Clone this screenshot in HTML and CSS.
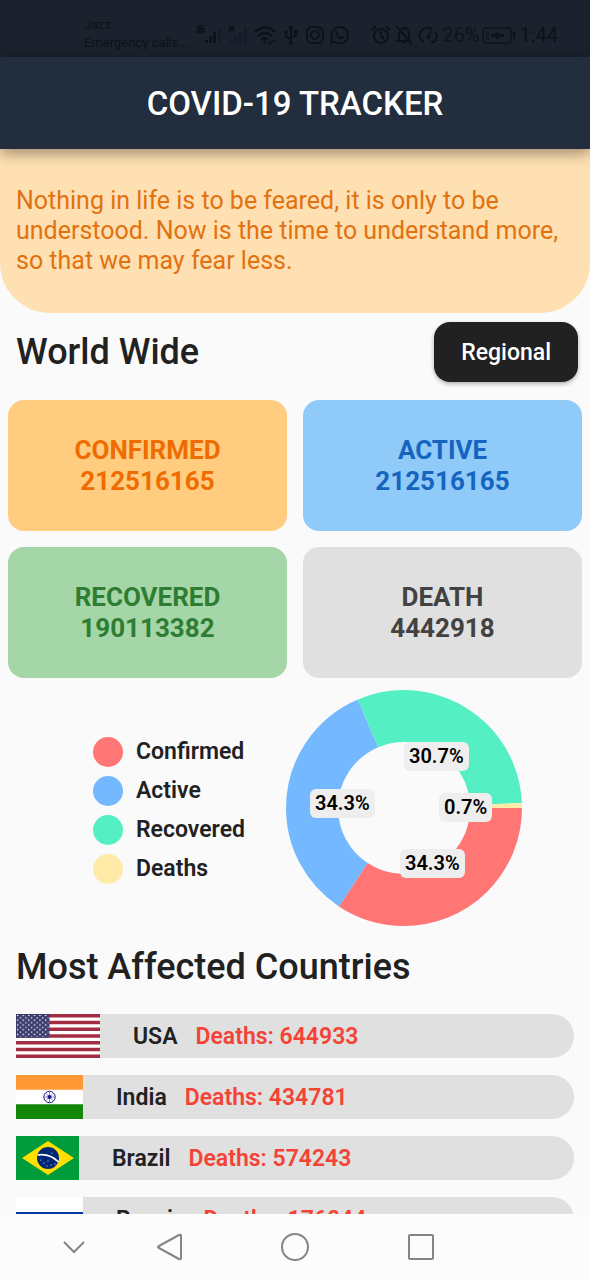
FILE: index.html
```html
<!DOCTYPE html>
<html lang="en">
<head>
<meta charset="utf-8">
<meta name="viewport" content="width=device-width, initial-scale=1">
<title>COVID-19 Tracker</title>
<link rel="stylesheet" href="styles.css">
</head>
<body class="app">
<div class="status">
  <div class="carrier"><span>Jazz</span><span>Emergency calls...</span></div>
  <div class="status-icons">
    <svg width="28" height="24" viewBox="0 0 28 24"><path d="M1 3h3v6H1M2 6h2M9 3H6v6h3V6H7" fill="none" stroke="currentColor" stroke-width="1.6"/><path d="M10 17h3v3h-3zM14 13h3v7h-3zM18 9h3v11h-3z" fill="currentColor"/><path d="M23 4h3v16h-3z" fill="currentColor" opacity=".3"/></svg>
    <svg width="22" height="24" viewBox="0 0 22 24"><path d="M2 3l5 5M7 3L2 8" stroke="currentColor" stroke-width="2"/><path d="M2 17h3v3H2zM7 13h3v7H7zM12 9h3v11h-3zM17 4h3v16h-3z" fill="currentColor" opacity=".3"/></svg>
    <svg width="24" height="24" viewBox="0 0 24 24"><path d="M2 9q10-9 20 0M5 13q7-6 14 0M8 17q4-3 7-1" fill="none" stroke="currentColor" stroke-width="2.4"/><path d="M10 18l2 3 2-3zM15 21l2-4 2 4zM19 17l2 4 1-4z" fill="currentColor"/></svg>
    <svg width="20" height="24" viewBox="0 0 20 24"><path d="M10 5v14M5 10v3l5 4M15 9v3l-5 3" fill="none" stroke="currentColor" stroke-width="2"/><path d="M10 2l3 4H7zM13 7h4v4h-4z" fill="currentColor"/><circle cx="5" cy="9" r="2" fill="currentColor"/><circle cx="10" cy="20" r="2" fill="currentColor"/></svg>
    <svg width="20" height="24" viewBox="0 0 20 24"><g fill="none" stroke="currentColor" stroke-width="2"><rect x="2" y="4" width="16" height="16" rx="5"/><circle cx="10" cy="12" r="4"/></g><circle cx="15" cy="7" r="1" fill="currentColor"/></svg>
    <svg width="20" height="24" viewBox="0 0 20 24"><path d="M2 20l1-5a8.300 8.300 0 1 1 3 4z" fill="none" stroke="currentColor" stroke-width="2"/><path d="M6 8q1-2 2 0l1 2-1 1q1 2 3 3l1-1 3 1q0 3-3 2.500Q7 15 6 8z" fill="currentColor"/></svg>
  </div>
  <div class="status-icons status-end">
    <svg width="20" height="24" viewBox="0 0 20 24"><g fill="none" stroke="currentColor" stroke-width="2"><circle cx="10" cy="13" r="7"/><path d="M10 8v5l3 3M1 7l4-4M19 7l-4-4"/></g></svg>
    <svg width="20" height="24" viewBox="0 0 20 24"><path d="M7 6q8-3 8 5v5M5 9v7l-2 2h13M2 3l16 18M10 3v2" fill="none" stroke="currentColor" stroke-width="2"/><path d="M8 19h4l-2 2z" fill="currentColor"/></svg>
    <svg width="22" height="24" viewBox="0 0 22 24"><path d="M6 19Q-1 13 5 7q4-4 10-1M18 9q4 5-1 10h-3M6 19v-3" fill="none" stroke="currentColor" stroke-width="2"/><path d="M9 14l7-8-4 10q-3 1-3-2z" fill="currentColor"/></svg>
    <span>26%</span>
    <svg width="34" height="24" viewBox="0 0 34 24"><rect x="1" y="5" width="28" height="15" rx="3" fill="none" stroke="currentColor" stroke-width="2" opacity=".7"/><path d="M31 9h2v7h-2zM9 11h4l3-3 1 3h5v3h-5l-1 3-3-3H9z" fill="currentColor"/><path d="M4 8h3v9H4z" fill="currentColor" opacity=".5"/></svg>
    <span>1:44</span>
  </div>
</div>
<header class="appbar"><h1>COVID-19 TRACKER</h1></header>
<main class="content">
  <p class="quote">Nothing in life is to be feared, it is only to be understood. Now is the time to understand more, so that we may fear less.</p>
  <div class="section-head">
    <h2>World Wide</h2>
    <button class="regional" type="button">Regional</button>
  </div>
  <section class="cards">
    <div class="card confirmed"><span>CONFIRMED</span><span>212516165</span></div>
    <div class="card active"><span>ACTIVE</span><span>212516165</span></div>
    <div class="card recovered"><span>RECOVERED</span><span>190113382</span></div>
    <div class="card death"><span>DEATH</span><span>4442918</span></div>
  </section>
  <section class="chart">
    <ul class="legend">
      <li><i class="dot red"></i>Confirmed</li>
      <li><i class="dot blue"></i>Active</li>
      <li><i class="dot green"></i>Recovered</li>
      <li><i class="dot yellow"></i>Deaths</li>
    </ul>
    <div class="donut">
      <svg width="238" height="238" viewBox="0 0 238 238">
        <g fill="none" stroke-width="52">
          <circle cx="119" cy="119" r="92" pathLength="1000" stroke="#ff7675" stroke-dasharray="343 657"/>
          <circle cx="119" cy="119" r="92" pathLength="1000" stroke="#74b9ff" stroke-dasharray="343 657" stroke-dashoffset="-343"/>
          <circle cx="119" cy="119" r="92" pathLength="1000" stroke="#55efc4" stroke-dasharray="307 693" stroke-dashoffset="-686"/>
          <circle cx="119" cy="119" r="92" pathLength="1000" stroke="#ffeaa7" stroke-dasharray="7 993" stroke-dashoffset="-993"/>
        </g>
      </svg>
      <span class="tag tag-green">30.7%</span>
      <span class="tag tag-blue">34.3%</span>
      <span class="tag tag-yellow">0.7%</span>
      <span class="tag tag-red">34.3%</span>
    </div>
  </section>
  <h2 class="affected">Most Affected Countries</h2>
  <ul class="countries">
    <li class="country">
      <svg width="84" height="44" viewBox="0 0 84 44">
        <defs><pattern id="stars" width="5.600" height="4.800" patternUnits="userSpaceOnUse"><circle cx="1.600" cy="1.400" r=".8" fill="#fff"/><circle cx="4.400" cy="3.800" r=".8" fill="#fff"/></pattern></defs>
        <path d="M0 0h84v44H0z" fill="#fff"/>
        <path d="M0 1.700h84M0 8.460h84M0 15.230h84M0 22h84M0 28.770h84M0 35.540h84M0 42.300h84" stroke="#a32e44" stroke-width="3.390"/>
        <path d="M0 0h33.500v23.700H0z" fill="#3c3b6e"/><path d="M1 1h31.500v22H1z" fill="url(#stars)"/>
      </svg>
      <span class="name">USA</span><span class="deaths">Deaths: 644933</span>
    </li>
    <li class="country">
      <svg width="67" height="44" viewBox="0 0 67 44">
        <path d="M0 0h67v44H0z" fill="#fff"/><path d="M0 0h67v14.700H0z" fill="#ff9933"/><path d="M0 29.300h67V44H0z" fill="#138808"/>
        <g stroke="#1a1a8c" fill="none"><circle cx="33.500" cy="22" r="5.700"/><path d="M33.500 17v10M28.500 22h10M30 18.500l7 7M37 18.500l-7 7" stroke-width=".5"/></g><circle cx="33.500" cy="22" r="2" fill="#1a1a8c"/>
      </svg>
      <span class="name">India</span><span class="deaths">Deaths: 434781</span>
    </li>
    <li class="country">
      <svg width="63" height="44" viewBox="0 0 63 44">
        <path d="M0 0h63v44H0z" fill="#009b3a"/><path d="M6 22L32 5l26 17-26 17z" fill="#fedf00"/><circle cx="32" cy="22" r="11" fill="#002776"/>
        <path d="M21.500 19q12-2 21 7" fill="none" stroke="#fff" stroke-width="1.700"/>
        <g fill="#fff"><circle cx="25" cy="24" r=".6"/><circle cx="28" cy="27" r=".6"/><circle cx="32" cy="25" r=".5"/><circle cx="35" cy="29" r=".6"/><circle cx="39" cy="28" r=".6"/><circle cx="31" cy="30" r=".5"/><circle cx="36" cy="17" r=".5"/></g>
      </svg>
      <span class="name">Brazil</span><span class="deaths">Deaths: 574243</span>
    </li>
    <li class="country">
      <svg width="67" height="44" viewBox="0 0 67 44"><path d="M0 0h67v15H0z" fill="#fff"/><path d="M0 15h67v15H0z" fill="#0039a6"/><path d="M0 30h67v14H0z" fill="#d52b1e"/></svg>
      <span class="name">Russia</span><span class="deaths">Deaths: 176044</span>
    </li>
  </ul>
</main>
<nav class="navbar">
  <button class="hide" type="button" aria-label="Hide"><svg width="24" height="30" viewBox="0 0 24 30"><path d="M2 10l10 10 10-10"/></svg></button>
  <div class="nav-main">
    <button type="button" aria-label="Back"><svg width="28" height="30" viewBox="0 0 28 30"><path d="M24 3q2-1 2 1v22q0 2-2 1L4 16q-2-1 0-2z"/></svg></button>
    <button type="button" aria-label="Home"><svg width="30" height="30" viewBox="0 0 30 30"><circle cx="15" cy="15" r="13"/></svg></button>
    <button type="button" aria-label="Recents"><svg width="28" height="30" viewBox="0 0 28 30"><rect x="2" y="3" width="24" height="24" rx="1"/></svg></button>
  </div>
</nav>
</body>
</html>
```
FILE: styles.css
```css
* { box-sizing: border-box; }
.app {
  margin: 0;
  height: 100vh;
  display: flex;
  flex-direction: column;
  background: #fafafa;
  color: #212121;
  font-family: Roboto, sans-serif;
}
h1, h2, p, ul { margin: 0; padding: 0; }
ul { list-style: none; }
svg { display: block; flex: none; }
button { font: inherit; border: 0; padding: 0; }

.status {
  flex: none;
  display: flex;
  align-items: flex-end;
  height: 57px;
  padding: 0 32px 5px 84px;
  background: #1b222d;
  color: #0c121b;
}
.carrier {
  display: flex;
  flex-direction: column;
  width: 111px;
  font-size: 13px;
  line-height: 18px;
  white-space: nowrap;
}
.status-icons {
  display: flex;
  align-items: center;
  gap: 4px;
  height: 34px;
  font-size: 20px;
}
.status-end { gap: 3px; margin-left: auto; }

.appbar {
  flex: none;
  position: relative;
  z-index: 1;
  display: flex;
  align-items: center;
  justify-content: center;
  height: 92px;
  background: #222d3d;
  color: #fff;
  box-shadow: 0 4px 14px rgba(0, 0, 0, .4);
}
.appbar h1 { font-size: 33px; font-weight: 500; }

.content { flex: 1; min-height: 0; overflow: hidden; }
.quote {
  padding: 37px 16px;
  border-radius: 0 0 50px 50px;
  background: #ffe0b2;
  color: #e2720f;
  font-size: 25px;
  line-height: 30px;
}
.section-head {
  display: flex;
  align-items: center;
  justify-content: space-between;
  padding: 9px 12px 18px 16px;
}
h2 { font-size: 36px; font-weight: 500; line-height: 42px; }
.regional {
  height: 60px;
  padding: 0 27px;
  border-radius: 16px;
  background: #212121;
  color: #fff;
  font-size: 23px;
  font-weight: 500;
  box-shadow: 0 2px 4px rgba(0, 0, 0, .3);
}

.cards {
  display: grid;
  grid-template-columns: 1fr 1fr;
  gap: 16px;
  padding: 0 8px;
}
.card {
  display: flex;
  flex-direction: column;
  align-items: center;
  justify-content: center;
  height: 131px;
  border-radius: 16px;
  font-size: 26px;
  font-weight: 700;
  line-height: 31px;
}
.confirmed { background: #ffcc80; color: #ef6c00; }
.active { background: #90caf9; color: #1565c0; }
.recovered { background: #a5d6a7; color: #2e7d32; }
.death { background: #e0e0e0; color: #424242; }

.chart {
  display: flex;
  align-items: center;
  justify-content: center;
  gap: 40px;
  padding: 11px 0 0 26px;
}
.legend { display: grid; gap: 9px; padding-top: 4px; }
.legend li {
  display: flex;
  align-items: center;
  gap: 13px;
  font-size: 23px;
  font-weight: 600;
  line-height: 30px;
}
.dot { width: 30px; height: 30px; border-radius: 50%; }
.red { background: #ff7675; }
.blue { background: #74b9ff; }
.green { background: #55efc4; }
.yellow { background: #ffeaa7; }
.donut { position: relative; }
.tag {
  position: absolute;
  padding: 0 5px;
  border-radius: 6px;
  background: #eee;
  color: #000;
  font-size: 20px;
  font-weight: 600;
  line-height: 29px;
}
.tag-green { left: 119px; top: 53px; }
.tag-blue { left: 25px; top: 100px; }
.tag-yellow { left: 154px; top: 104px; }
.tag-red { left: 115px; top: 160px; }

.affected { padding: 19px 16px 26px; }
.countries { display: grid; gap: 17px; padding: 0 16px; }
.country {
  display: flex;
  align-items: center;
  height: 44px;
  border-radius: 0 22px 22px 0;
  background: #e0e0e0;
  font-size: 23px;
  font-weight: 600;
}
.name { margin: 0 18px 0 33px; }
.deaths { color: #f44336; }

.navbar {
  flex: none;
  display: flex;
  align-items: center;
  gap: 69px;
  height: 66px;
  padding: 0 62px;
  background: #fcfcfc;
}
.nav-main { display: flex; gap: 97px; }
.navbar button { background: none; }
.navbar svg { fill: none; stroke: #858585; stroke-width: 2; }
```
